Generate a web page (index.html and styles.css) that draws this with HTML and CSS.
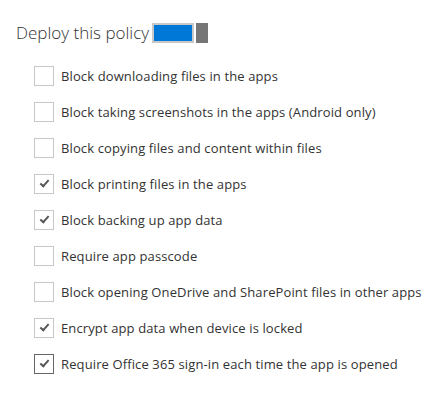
FILE: index.html
```html
<!DOCTYPE html>
<html lang="en">
<head>
    <meta charset="UTF-8">
    <title>Deploy this policy</title>
    <link rel="stylesheet" href="styles.css">
</head>
<body>
    <div class="header">
        <h2>Deploy this policy</h2>
        <div class="toggle">
            <span class="track"></span>
            <span class="thumb"></span>
        </div>
    </div>
    <ul class="options">
        <li><span class="box"></span>Block downloading files in the apps</li>
        <li><span class="box"></span>Block taking screenshots in the apps (Android only)</li>
        <li><span class="box"></span>Block copying files and content within files</li>
        <li><span class="box checked"></span>Block printing files in the apps</li>
        <li><span class="box checked"></span>Block backing up app data</li>
        <li><span class="box"></span>Require app passcode</li>
        <li><span class="box"></span>Block opening OneDrive and SharePoint files in other apps</li>
        <li><span class="box checked"></span>Encrypt app data when device is locked</li>
        <li><span class="box checked focus"></span>Require Office 365 sign-in each time the app is opened</li>
    </ul>
</body>
</html>
```

FILE: styles.css
```css
body {
    margin: 0;
    padding: 22px 0 0 16px;
    font-family: "Open Sans", "Noto Sans", Arial, sans-serif;
    color: #333;
    background: #fff;
}
.header {
    display: flex;
    align-items: center;
    height: 22px;
}
h2 {
    margin: 0;
    font-size: 17px;
    font-weight: 300;
    color: #333;
    line-height: 22px;
}
.toggle {
    display: flex;
    gap: 2px;
    margin-left: 3px;
}
.track {
    width: 38px;
    height: 16px;
    border: 2px solid #c8c8c8;
    background-color: #0078d7;
}
.thumb {
    width: 12px;
    height: 20px;
    background-color: #767676;
}
.options {
    list-style: none;
    margin: 22px 0 0 18px;
    padding: 0;
    display: flex;
    flex-direction: column;
    gap: 16px;
}
.options li {
    display: flex;
    align-items: center;
    height: 20px;
    font-size: 13px;
    letter-spacing: 0.12px;
}
.box {
    box-sizing: border-box;
    width: 20px;
    height: 20px;
    border: 1px solid #c8c8c8;
    margin-right: 7px;
    position: relative;
}
.box.focus {
    border-color: #666;
}
.box.checked::after {
    content: "";
    position: absolute;
    left: 6.5px;
    top: 3px;
    width: 3px;
    height: 7px;
    border-right: 2px solid #555;
    border-bottom: 2px solid #555;
    transform: rotate(42deg);
}
```
